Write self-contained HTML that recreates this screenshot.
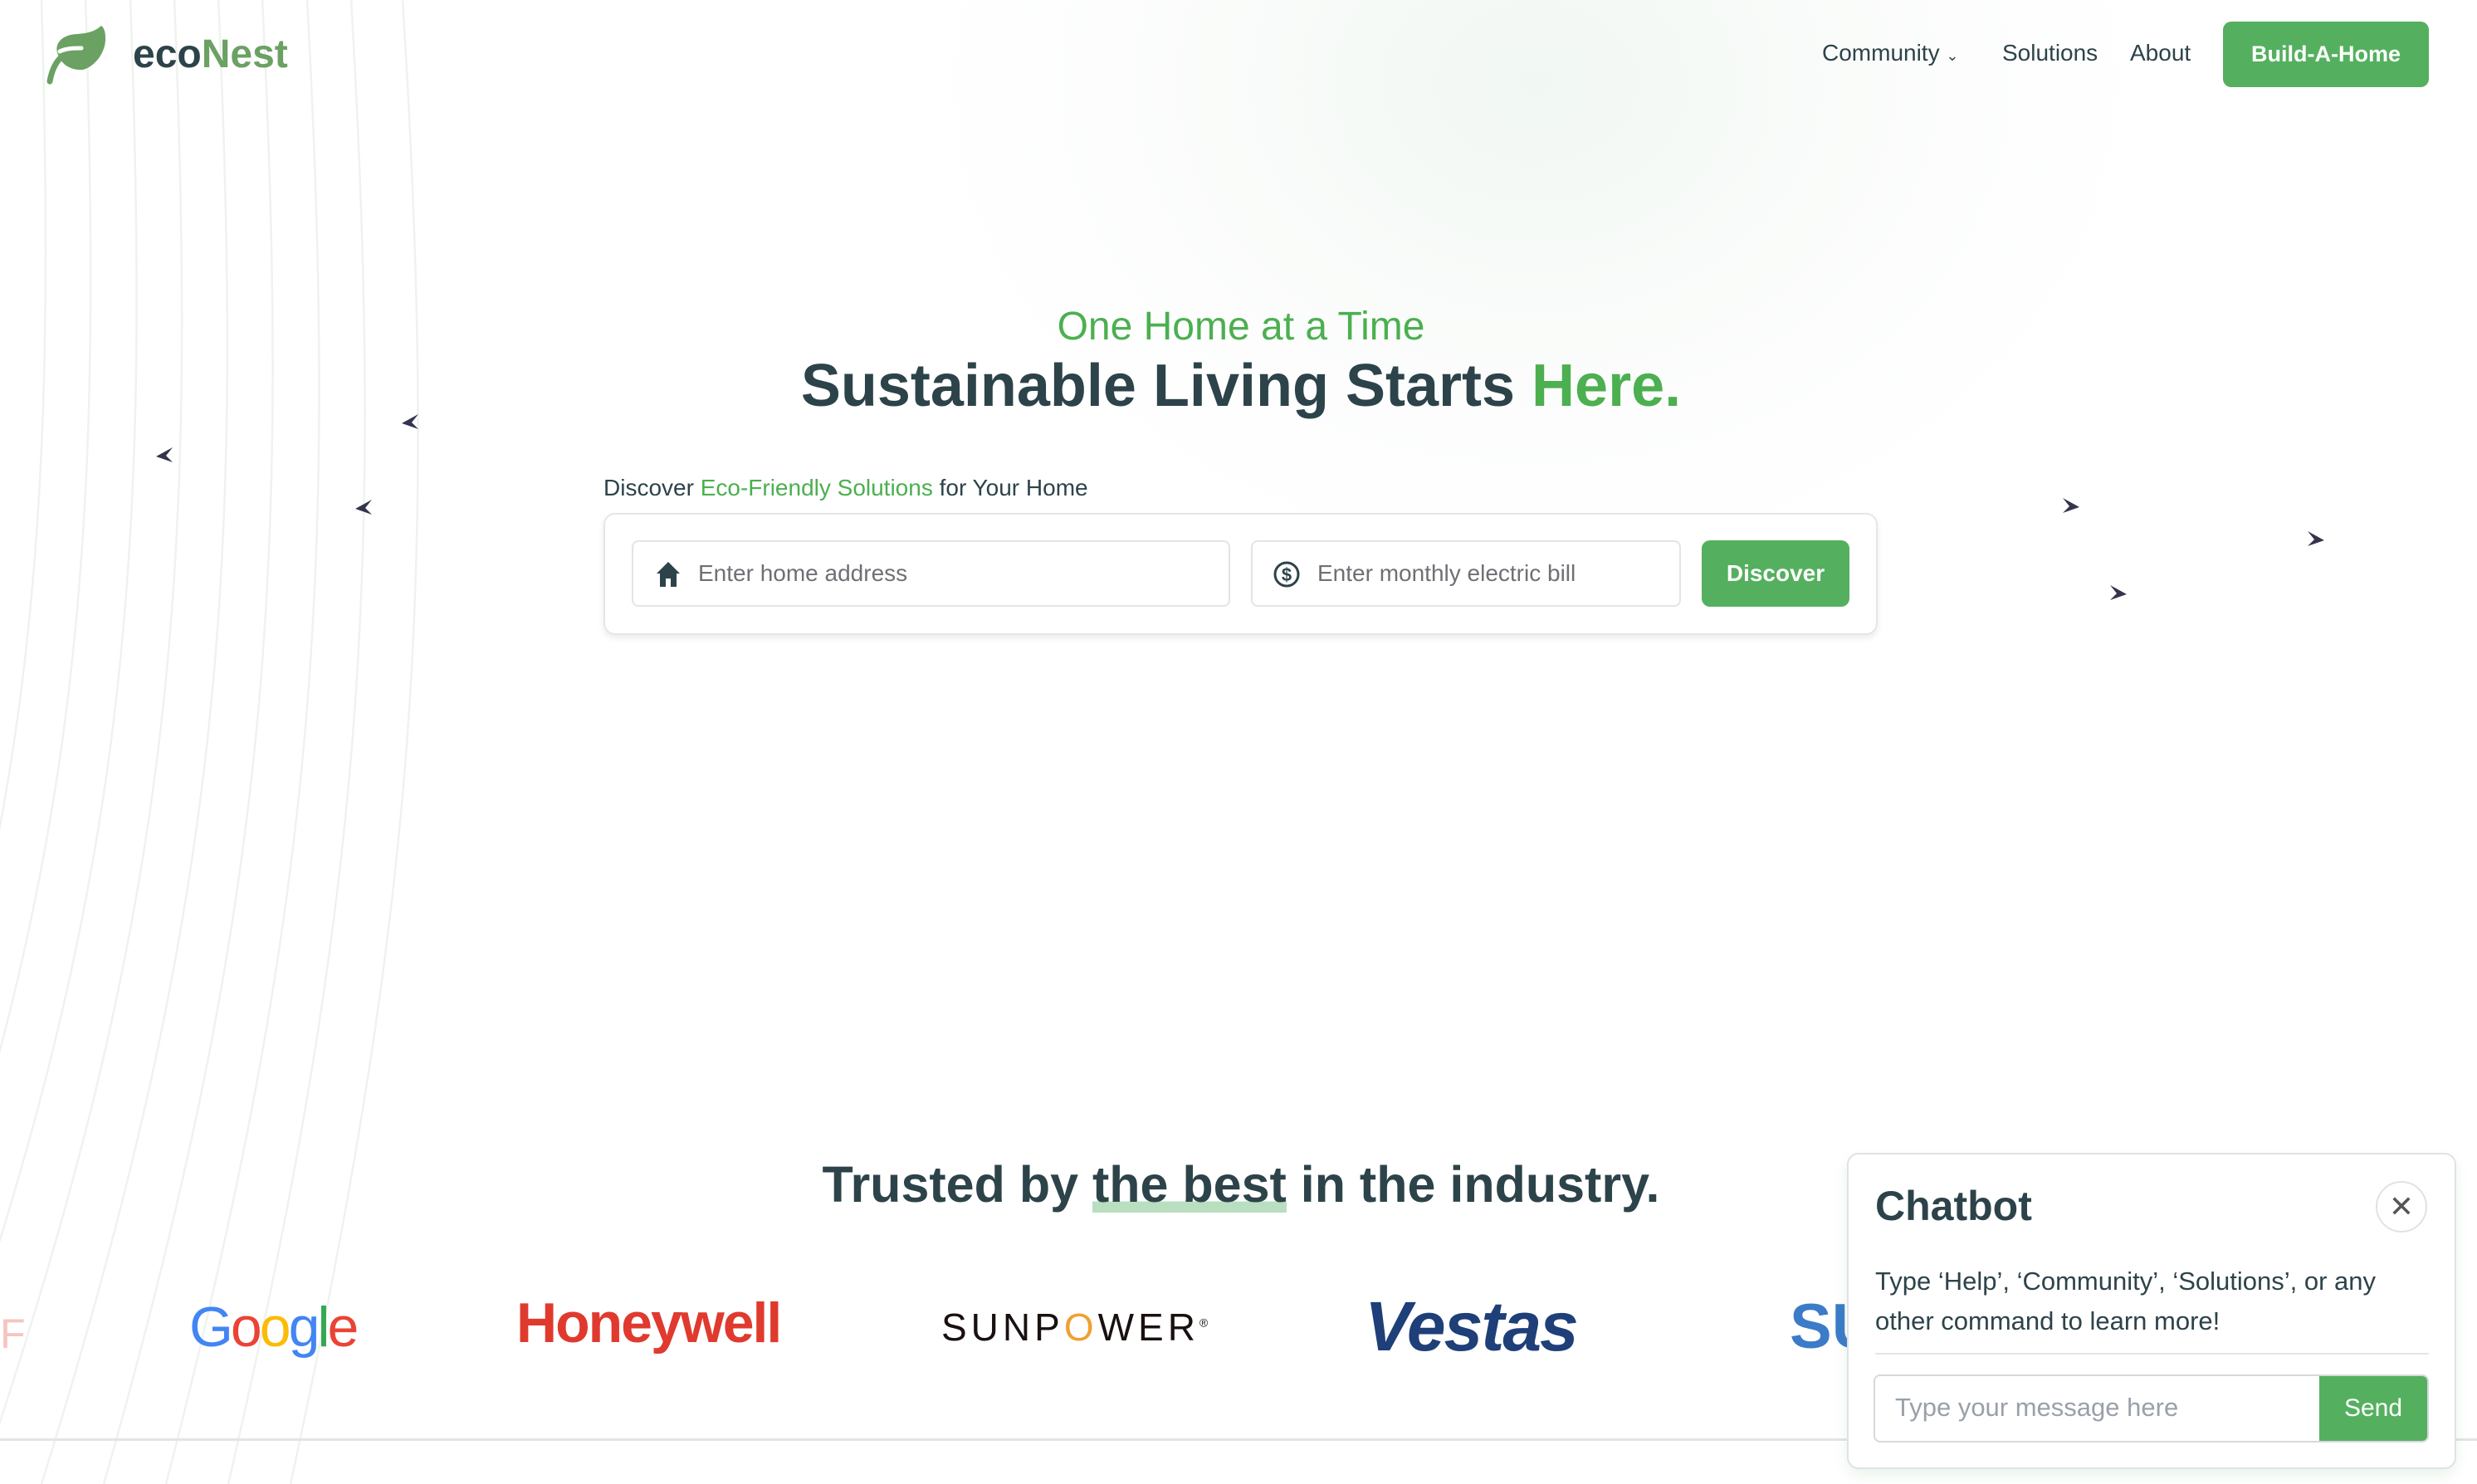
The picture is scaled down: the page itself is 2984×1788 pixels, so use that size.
<!DOCTYPE html>
<html><head><meta charset="utf-8">
<style>
*{margin:0;padding:0;box-sizing:border-box}
html,body{width:2984px;height:1788px;overflow:hidden;background:#fff;font-family:"Liberation Sans",sans-serif;color:#2d434a}
.abs{position:absolute;white-space:nowrap}
.glow{position:absolute;left:1100px;top:-500px;width:1500px;height:1200px;border-radius:50%;background:radial-gradient(ellipse at center,rgba(232,242,234,0.6) 0%,rgba(244,248,245,0.4) 40%,rgba(255,255,255,0) 70%)}
.nav{font-size:28px;color:#2d434a;top:48px}
.btn{background:#54b05f;color:#fff;border-radius:10px;text-align:center;font-weight:bold}
.inp{position:absolute;border:2px solid #e4e4e4;border-radius:8px;background:#fff;top:651px;height:80px}
.ph{position:absolute;top:22px;font-size:28px;color:#6f6f75}
</style></head><body>
<div class="glow"></div>
<svg class="abs" style="left:0;top:0" width="700" height="1788">
<g fill="none" stroke="#eef3ee" stroke-width="2.5">
<path d="M50 0 C70 700 40 1100 -250 1788"/>
<path d="M103 0 C126 700 96 1100 -175 1788"/>
<path d="M157 0 C183 700 153 1100 -100 1788"/>
<path d="M210 0 C239 700 209 1100 -25 1788"/>
<path d="M263 0 C295 700 265 1100 50 1788"/>
<path d="M316 0 C351 700 321 1100 125 1788"/>
<path d="M370 0 C408 700 378 1100 200 1788"/>
<path d="M423 0 C464 700 434 1100 275 1788"/>
<path d="M485 0 C529 700 499 1100 350 1788"/>
</g></svg>
<svg class="abs" style="left:0;top:0" width="2984" height="800">
<g fill="#34344e">
<path d="M188 550 l20 -11 l-8 10 l8 8 z"/>
<path d="M484 510 l20 -11 l-8 10 l8 8 z"/>
<path d="M428 613 l20 -11 l-8 10 l8 8 z"/>
<path d="M2505 611 l-20 -11 l8 10 l-8 8 z"/>
<path d="M2800 651 l-20 -11 l8 10 l-8 8 z"/>
<path d="M2562 716 l-20 -11 l8 10 l-8 8 z"/>
</g></svg>
<svg class="abs" style="left:55px;top:28px" width="90" height="76" viewBox="55 28 90 76">
<path d="M122 31 C110 42 95 40 85 42 C72 45 65 55 70 66 C75 80 88 85 100 84 C115 80 128 62 127 45 C127 38 125 33 122 31 Z" fill="#6ba163"/>
<path d="M98 60 C80 60 65 70 60 98" stroke="#6ba163" stroke-width="7" fill="none" stroke-linecap="round"/>
<path d="M72 62 C80 58 90 58 98 58" stroke="#fff" stroke-width="5" fill="none" stroke-linecap="round"/>
</svg>
<div class="abs" style="left:160px;top:38px;font-size:48px;font-weight:bold;letter-spacing:0px"><span style="color:#2d434a">eco</span><span style="color:#6ba163">Nest</span></div>
<div class="abs nav" style="left:2195px">Community <span style="font-size:18px">&#8964;</span></div>
<div class="abs nav" style="left:2412px">Solutions</div>
<div class="abs nav" style="left:2566px">About</div>
<div class="abs btn" style="left:2678px;top:26px;width:248px;height:79px;line-height:79px;font-size:27px">Build-A-Home</div>
<div class="abs" style="left:0;width:2990px;text-align:center;top:366px;font-size:48px;color:#4caf50">One Home at a Time</div>
<div class="abs" style="left:0;width:2990px;text-align:center;top:424px;font-size:72px;font-weight:bold;color:#2d434a">Sustainable Living Starts <span style="color:#4caf50">Here.</span></div>
<div class="abs" style="left:727px;top:572px;font-size:28px">Discover <span style="color:#4caf50">Eco-Friendly Solutions</span> for Your Home</div>
<div class="abs" style="left:727px;top:618px;width:1535px;height:147px;border:2px solid #e6e6e6;border-radius:14px;box-shadow:0 4px 8px rgba(0,0,0,0.08);background:#fff"></div>
<div class="inp" style="left:761px;width:721px">
<svg class="abs" style="left:26px;top:22px" width="32" height="34" viewBox="0 0 32 34"><path d="M16 2 L2 16 L6 16 L6 32 L13 32 L13 22 L19 22 L19 32 L26 32 L26 16 L30 16 Z" fill="#2d434a"/></svg>
<div class="ph" style="left:78px">Enter home address</div></div>
<div class="inp" style="left:1507px;width:518px">
<svg class="abs" style="left:24px;top:22px" width="34" height="34" viewBox="0 0 34 34"><circle cx="17" cy="17" r="14" fill="none" stroke="#2d434a" stroke-width="3"/><text x="17" y="25" text-anchor="middle" font-size="22" font-weight="bold" fill="#2d434a" font-family="Liberation Sans">$</text></svg>
<div class="ph" style="left:78px">Enter monthly electric bill</div></div>
<div class="abs btn" style="left:2050px;top:651px;width:178px;height:80px;line-height:80px;font-size:28px">Discover</div>
<div class="abs" style="left:0;width:2990px;text-align:center;top:1392px;font-size:61px;font-weight:bold;color:#2d434a">Trusted by <span style="background:linear-gradient(transparent 80%,#b9dfc0 80%)">the best</span> in the industry.</div>
<div class="abs" style="left:228px;top:1560px;font-size:68px;letter-spacing:-3px"><span style="color:#4285f4">G</span><span style="color:#ea4335">o</span><span style="color:#fbbc05">o</span><span style="color:#4285f4">g</span><span style="color:#34a853">l</span><span style="color:#ea4335">e</span></div>
<div class="abs" style="left:622px;top:1555px;font-size:68px;font-weight:bold;color:#e03a2f;letter-spacing:-2px">Honeywell</div>
<div class="abs" style="left:1134px;top:1572px;font-size:46px;color:#1a1010;letter-spacing:5px">SUNP<span style="color:#f0a030">O</span>WER<sup style="font-size:14px">®</sup></div>
<div class="abs" style="left:1644px;top:1550px;font-size:84px;font-weight:bold;font-style:italic;color:#1e3f78;letter-spacing:-2px">Vestas</div>
<div class="abs" style="left:2156px;top:1555px;font-size:76px;font-weight:bold;color:#3b7bc8">SU</div>
<div class="abs" style="left:0;top:1578px;font-size:50px;color:#f5c5c0">F</div>
<div class="abs" style="left:0;top:1733px;width:2984px;height:3px;background:#e4e4e4"></div>
<div class="abs" style="left:2225px;top:1389px;width:734px;height:381px;background:#fff;border:2px solid #dfe2e5;border-radius:14px;box-shadow:0 8px 16px rgba(80,170,90,0.12)"></div>
<div class="abs" style="left:2259px;top:1424px;font-size:50px;font-weight:bold;color:#2d434a">Chatbot</div>
<div class="abs" style="left:2862px;top:1423px;width:62px;height:62px;border:2px solid #dfe2e5;border-radius:50%;text-align:center;line-height:58px;font-size:36px;color:#555">✕</div>
<div class="abs" style="left:2259px;top:1520px;font-size:31px;line-height:48px;color:#2d434a">Type ‘Help’, ‘Community’, ‘Solutions’, or any<br>other command to learn more!</div>
<div class="abs" style="left:2259px;top:1630px;width:667px;height:2px;background:#e3e5e8"></div>
<div class="abs" style="left:2257px;top:1656px;width:669px;height:82px;border:2px solid #d6d9dd;border-radius:8px;overflow:hidden;background:#fff">
<div class="abs" style="left:24px;top:20px;font-size:31px;color:#9aa0aa">Type your message here</div>
<div class="abs btn" style="right:0;top:0;width:130px;height:78px;line-height:78px;border-radius:0;font-size:30px;font-weight:normal">Send</div>
</div>
</body></html>
